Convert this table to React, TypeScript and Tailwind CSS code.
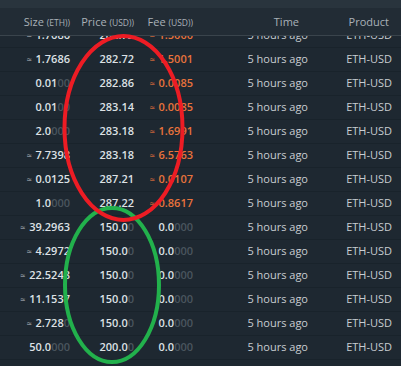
import React from "react";

type Num = { approx?: boolean; main: string; dim?: string };
type Row = { size: Num; price: Num; fee: Num & { orange?: boolean } };

const rows: Row[] = [
  { size: { approx: true, main: "1.7686" }, price: { main: "282.72" }, fee: { approx: true, main: "1.5000", orange: true } },
  { size: { approx: true, main: "1.7686" }, price: { main: "282.72" }, fee: { approx: true, main: "1.5001", orange: true } },
  { size: { main: "0.01", dim: "00" }, price: { main: "282.86" }, fee: { approx: true, main: "0.0085", orange: true } },
  { size: { main: "0.01", dim: "00" }, price: { main: "283.14" }, fee: { approx: true, main: "0.0085", orange: true } },
  { size: { main: "2.0", dim: "000" }, price: { main: "283.18" }, fee: { approx: true, main: "1.6991", orange: true } },
  { size: { approx: true, main: "7.7398" }, price: { main: "283.18" }, fee: { approx: true, main: "6.5763", orange: true } },
  { size: { approx: true, main: "0.0125" }, price: { main: "287.21" }, fee: { approx: true, main: "0.0107", orange: true } },
  { size: { main: "1.0", dim: "000" }, price: { main: "287.22" }, fee: { approx: true, main: "0.8617", orange: true } },
  { size: { approx: true, main: "39.2963" }, price: { main: "150.0", dim: "0" }, fee: { main: "0.0", dim: "000" } },
  { size: { approx: true, main: "4.2972" }, price: { main: "150.0", dim: "0" }, fee: { main: "0.0", dim: "000" } },
  { size: { approx: true, main: "22.5248" }, price: { main: "150.0", dim: "0" }, fee: { main: "0.0", dim: "000" } },
  { size: { approx: true, main: "11.1537" }, price: { main: "150.0", dim: "0" }, fee: { main: "0.0", dim: "000" } },
  { size: { approx: true, main: "2.728", dim: "0" }, price: { main: "150.0", dim: "0" }, fee: { main: "0.0", dim: "000" } },
  { size: { main: "50.0", dim: "000" }, price: { main: "200.0", dim: "0" }, fee: { main: "0.0", dim: "000" } },
  { size: { main: "" }, price: { main: "" }, fee: { main: "" } },
];

function Cell({ n, orange }: { n: Num; orange?: boolean }) {
  return (
    <div className="text-right font-semibold whitespace-nowrap">
      {n.approx && (
        <span className={`text-[9px] font-normal mr-[4px] ${orange ? "text-[#e9733c]" : "text-[#aab2b9]"}`}>≈</span>
      )}
      <span className={orange ? "text-[#e9733c]" : "text-[#dde1e5]"}>{n.main}</span>
      {n.dim && <span className="text-[#4a555e]">{n.dim}</span>}
    </div>
  );
}

export default function App() {
  return (
    <div
      className="relative w-[401px] h-[366px] overflow-hidden bg-[#1e2831] text-[11px]"
      style={{ fontFamily: '"Open Sans", "Noto Sans", sans-serif' }}
    >
      <div className="h-[8px] bg-[#29343d]" />
      <div className="h-[28px] bg-[#222c35] border-b border-[#3a444c] grid grid-cols-[70px_64px_59px_115px_84px] items-center pt-[2px] text-[#a9b1b8]">
        <div className="text-right whitespace-nowrap">
          Size <span className="text-[8.5px]">(ETH))</span>
        </div>
        <div className="text-right whitespace-nowrap">
          Price <span className="text-[8.5px]">(USD))</span>
        </div>
        <div className="text-right whitespace-nowrap">
          Fee <span className="text-[8.5px]">(USD))</span>
        </div>
        <div className="text-right pr-[9px]">Time</div>
        <div className="text-right pr-[3px]">Product</div>
      </div>
      <div className="overflow-hidden">
        <div className="-mt-[12px]">
          {rows.map((r, i) => (
            <div
              key={i}
              className="h-[24px] border-b border-[#19232b] grid grid-cols-[70px_64px_59px_115px_84px] items-center"
            >
              <Cell n={r.size} />
              <Cell n={r.price} />
              <Cell n={r.fee} orange={r.fee.orange} />
              <div className="text-right text-[#c8cdd2]">{r.size.main ? "5 hours ago" : ""}</div>
              <div className="text-right text-[#c8cdd2]">{r.size.main ? "ETH-USD" : ""}</div>
            </div>
          ))}
        </div>
      </div>
      <svg className="absolute inset-0 pointer-events-none" width="401" height="366" viewBox="0 0 401 366">
        <ellipse cx="112" cy="285" rx="47" ry="77" fill="none" stroke="#22b14c" strokeWidth="4" />
        <ellipse cx="123.5" cy="128" rx="59" ry="92" fill="none" stroke="#ed1c24" strokeWidth="4" />
      </svg>
    </div>
  );
}
